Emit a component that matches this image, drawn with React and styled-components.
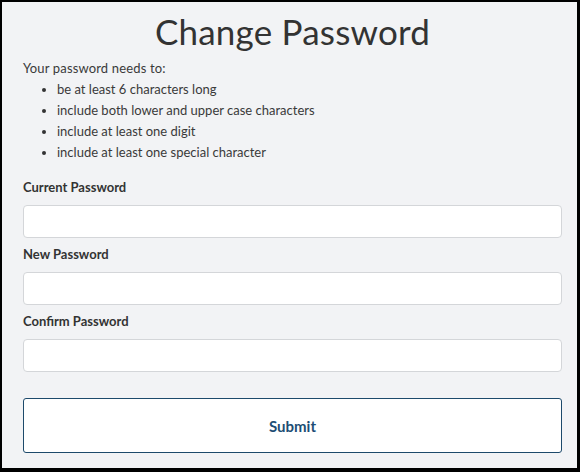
import React from 'react';
import styled, { createGlobalStyle } from 'styled-components';

const GlobalStyle = createGlobalStyle`
  html, body {
    margin: 0;
    padding: 0;
    background: #000;
  }
  * {
    box-sizing: border-box;
  }
`;

const StyledFrame = styled.div`
  width: 580px;
  height: 472px;
  border-style: solid;
  border-color: #000;
  border-width: 2px 3px 4px 2px;
  background: #f2f3f5;
  font-family: 'Lato', 'Open Sans', sans-serif;
  color: #333;
`;

const StyledForm = styled.form`
  display: flex;
  flex-direction: column;
  padding: 9px 15px 0 21px;
`;

const StyledHeading = styled.h1`
  margin: 0;
  font-size: 35px;
  line-height: 40px;
  font-weight: 400;
  letter-spacing: 0.2px;
  text-align: center;
  color: #333;
`;

const StyledIntro = styled.p`
  margin: 7px 0 0 0;
  font-size: 13px;
  line-height: 21px;
  letter-spacing: 0.15px;
  color: #3a3a3a;
`;

const StyledList = styled.ul`
  margin: 0;
  padding: 0 0 0 19px;
  list-style: none;
  font-size: 13px;
  line-height: 21px;
  color: #3a3a3a;
`;

const StyledItem = styled.li`
  display: flex;
  align-items: center;
  gap: 11px;

  &::before {
    content: '';
    width: 4px;
    height: 4px;
    border-radius: 50%;
    background: #333;
    flex-shrink: 0;
  }
`;

const StyledLabel = styled.label`
  display: block;
  margin-top: ${({ first }) => (first ? '15px' : '7px')};
  font-size: 13px;
  line-height: 18px;
  font-weight: 700;
  color: #333;
`;

const StyledInput = styled.input`
  display: block;
  width: 100%;
  height: 33px;
  margin-top: 9px;
  border: 1px solid #d4d6d9;
  border-radius: 4px;
  background: #fff;
  font: inherit;
  padding: 0 10px;
  outline: none;
`;

const StyledButton = styled.button`
  width: 100%;
  height: 55px;
  margin-top: 26px;
  border: 1px solid #1d4a6b;
  border-radius: 3px;
  background: #fff;
  color: #1d4d74;
  font-family: inherit;
  font-size: 15px;
  font-weight: 700;
  cursor: pointer;
`;

const rules = [
  'be at least 6 characters long',
  'include both lower and upper case characters',
  'include at least one digit',
  'include at least one special character'
];

const fields = ['Current Password', 'New Password', 'Confirm Password'];

const App = () => (
  <>
    <GlobalStyle />
    <StyledFrame>
      <StyledForm onSubmit={e => e.preventDefault()}>
        <StyledHeading>Change Password</StyledHeading>
        <StyledIntro>Your password needs to:</StyledIntro>
        <StyledList>
          {rules.map(rule => (
            <StyledItem key={rule}>{rule}</StyledItem>
          ))}
        </StyledList>
        {fields.map((field, i) => (
          <React.Fragment key={field}>
            <StyledLabel first={i === 0}>{field}</StyledLabel>
            <StyledInput type="password" />
          </React.Fragment>
        ))}
        <StyledButton type="submit">Submit</StyledButton>
      </StyledForm>
    </StyledFrame>
  </>
);

export default App;
